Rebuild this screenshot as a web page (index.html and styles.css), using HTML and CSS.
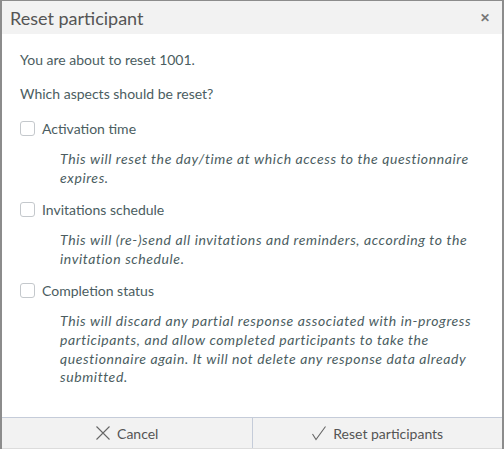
FILE: index.html
```html
<!DOCTYPE html>
<html>
<head>
<meta charset="utf-8">
<link rel="stylesheet" href="styles.css">
</head>
<body>
<div class="dialog">
  <div class="header">
    <span class="title">Reset participant</span>
    <span class="close">&#x2715;</span>
  </div>
  <div class="content">
    <p class="line">You are about to reset 1001.</p>
    <p class="line">Which aspects should be reset?</p>
    <div class="option">
      <label class="check"><span class="box"></span><span>Activation time</span></label>
      <p class="desc">This will reset the day/time at which access to the questionnaire expires.</p>
    </div>
    <div class="option">
      <label class="check"><span class="box"></span><span>Invitations schedule</span></label>
      <p class="desc">This will (re-)send all invitations and reminders, according to the invitation schedule.</p>
    </div>
    <div class="option">
      <label class="check"><span class="box"></span><span>Completion status</span></label>
      <p class="desc">This will discard any partial response associated with in-progress participants, and allow completed participants to take the questionnaire again. It will not delete any response data already submitted.</p>
    </div>
  </div>
  <div class="footer">
    <button class="btn">
      <svg width="16" height="16" viewBox="0 0 16 16"><path d="M1.5 1.5 L14.5 14.5 M14.5 1.5 L1.5 14.5" stroke="#666" stroke-width="1.1" fill="none"/></svg>
      <span>Cancel</span>
    </button>
    <button class="btn btn-right">
      <svg width="16" height="16" viewBox="0 0 16 16"><path d="M1.5 9 L5 14.5 L14.5 1.5" stroke="#666" stroke-width="1.1" fill="none"/></svg>
      <span>Reset participants</span>
    </button>
  </div>
</div>
</body>
</html>
```

FILE: styles.css
```css
html, body {
  margin: 0;
  padding: 0;
  background: #ffffff;
}
.dialog {
  box-sizing: border-box;
  width: 504px;
  height: 449px;
  border-top: 1px solid #8c8c8c;
  border-left: 2px solid #8c8c8c;
  border-right: 2px solid #8c8c8c;
  display: flex;
  flex-direction: column;
  font-family: Lato, "Noto Sans", sans-serif;
  background: #fff;
}
.header {
  height: 33px;
  background: #f2f2f2;
  display: flex;
  align-items: center;
  justify-content: space-between;
  padding: 0 12px 0 8px;
}
.title {
  font-size: 18px;
  color: #555;
}
.close {
  font-size: 12px;
  font-weight: bold;
  color: #777;
}
.content {
  flex: 1;
  padding: 17px 18px 0 18px;
  color: #4b5d61;
  font-size: 14px;
}
.line {
  margin: 0 0 17px 0;
  line-height: 17px;
}
.line + .line {
  margin-bottom: 18px;
}
.option {
  margin-bottom: 14px;
}
.check {
  display: flex;
  align-items: center;
  gap: 7px;
  height: 17px;
}
.box {
  width: 15px;
  height: 15px;
  box-sizing: border-box;
  border: 1px solid #c4c8cc;
  border-radius: 3px;
  background: #fff;
}
.desc {
  margin: 13px 0 0 40px;
  font-style: italic;
  line-height: 18.6px;
  letter-spacing: 0.6px;
}
.footer {
  height: 30px;
  border-top: 1px solid #c5ccd9;
  border-bottom: 1px solid #dcdcdc;
  background: #f2f2f2;
  display: flex;
}
.btn {
  flex: 1;
  border: none;
  background: transparent;
  font-family: Lato, "Noto Sans", sans-serif;
  font-size: 14px;
  color: #555;
  display: flex;
  align-items: center;
  justify-content: center;
  gap: 6px;
  padding: 0;
}
.btn-right {
  border-left: 1px solid #c5ccd9;
}
```
